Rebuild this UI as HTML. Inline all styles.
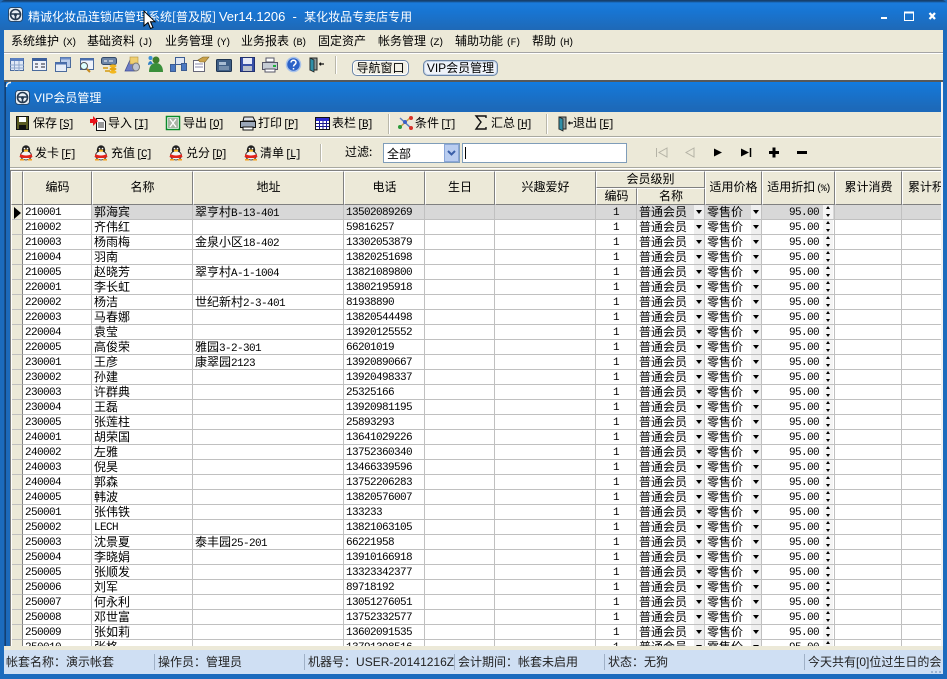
<!DOCTYPE html>
<html lang="zh"><head><meta charset="utf-8"><title>精诚化妆品连锁店管理系统</title>
<style>
*{box-sizing:border-box}
html,body{margin:0;padding:0}
body{width:947px;height:679px;overflow:hidden;position:relative;background:#1c6bbd;font:12px "WenQuanYi Zen Hei","Noto Sans CJK SC",sans-serif;color:#000}
.a{position:absolute;white-space:pre;line-height:14px}
.box{position:absolute}
svg{position:absolute;overflow:visible}
.m{font:10px "Liberation Mono",monospace}
.k{font:10px "Liberation Mono",monospace;letter-spacing:-1.5px;margin-left:3px}
.t{font:11px "Liberation Mono",monospace;letter-spacing:-1.6px;margin-left:1px}
.u{text-decoration:underline}
.w{color:#fff}
.sep{position:absolute;width:2px;background:#b9b7aa;border-right:1px solid #fff}
.h{position:absolute;background:#ece9d8;border-right:1px solid #808080;border-bottom:1px solid #808080;border-left:1px solid #fff;border-top:1px solid #fff;text-align:center;line-height:30px;white-space:pre}
table{position:absolute;left:1px;top:34px;border-collapse:separate;border-spacing:0;table-layout:fixed;width:990px}
th,td{height:15px;padding:2px 0 0 2px;border-right:1px solid #c0c0c0;border-bottom:1px solid #c0c0c0;font:11px/12px "Liberation Mono",monospace;letter-spacing:-.6px;white-space:nowrap;overflow:hidden;position:relative;background:#fff}
th{background:#ece9d8;border-right:1px solid #808080;padding:0}
td.c{font:12px/14px "WenQuanYi Zen Hei","Noto Sans CJK SC",sans-serif;letter-spacing:0;padding-top:0}
td .m{font-size:11px;letter-spacing:-.6px;line-height:0}
td.n{text-align:center;padding:2px 0 0 0}
td.r{text-align:right;padding:2px 15px 0 0}
tr.s td{background:#d8d8d8}
tr.s td:nth-child(2){background:#fff}
td i{position:absolute;right:0;top:0;width:10px;height:14px;background:#efefef}
td i:after{content:"";position:absolute;left:2px;top:5px;border:3px solid transparent;border-top:4px solid #000;border-bottom:0}
td b{position:absolute;right:1px;top:0;width:10px;height:14px;background:#f4f4f4}
td b:before,td b:after{content:"";position:absolute;left:3px;border:2px solid transparent}
td b:before{top:1px;border-bottom:3px solid #000;border-top:0}
td b:after{top:9px;border-top:3px solid #000;border-bottom:0}
.st{position:absolute;top:654px;font:12px/15px "Noto Sans CJK SC","Liberation Sans",sans-serif;color:#222;white-space:pre}
.ss{position:absolute;top:654px;width:1px;height:16px;background:#9fb0c6}
.cl{font-family:"Noto Sans CJK TC",sans-serif}
</style></head><body>
<svg width="0" height="0" style="position:absolute"><defs>
<symbol id="logo" viewBox="0 0 15 15"><rect x=".5" y=".5" width="14" height="14" rx="3" fill="#e8eef5" stroke="#27496e"/><circle cx="7.5" cy="7.5" r="5" fill="none" stroke="#24384f" stroke-width="1.6"/><path d="M3 7h9M7.5 8v4" stroke="#24384f" stroke-width="1.6"/><circle cx="7.5" cy="7.7" r="1.5" fill="#24384f"/></symbol>
<symbol id="qq" viewBox="0 0 16 16"><ellipse cx="8" cy="5" rx="4.2" ry="4.8" fill="#222"/><ellipse cx="8" cy="10.5" rx="5.5" ry="4.5" fill="#f4f4f4" stroke="#222" stroke-width=".8"/><path d="M2.500 9c3 2 8 2 11 0l1 3-3 1-7 0-3-1z" fill="#e2231a"/><ellipse cx="8" cy="5.6" rx="2.2" ry="1.1" fill="#f6b21a"/><path d="M2 14h4v1.500H2zM10 14h4v1.500h-4z" fill="#f6a01a"/><circle cx="6.500" cy="3.600" r=".8" fill="#fff"/><circle cx="9.500" cy="3.600" r=".8" fill="#fff"/></symbol>
<symbol id="door" viewBox="0 0 16 16"><path d="M1 1h7v12H1z" fill="#8b9a9a" stroke="#222"/><path d="M1 1l4 2v12l-4-2z" fill="#2f8fa7" stroke="#222" stroke-width=".8"/><path d="M10 7h3M11.500 5.500v3M13 7h2" stroke="#111" stroke-width="1.300"/></symbol>
</defs></svg>

<!-- window frame -->
<div class="box" style="left:0;top:0;width:947px;height:30px;background:linear-gradient(#16406f 0,#16406f 1px,#1a7bdc 3px,#1875d2 12px,#1f69b6 30px);border-radius:5px 5px 0 0"></div>
<div class="box" style="left:4px;top:30px;width:939px;height:23px;background:#ece9d8;border-bottom:1px solid #a5a5a5"></div>
<div class="box" style="left:4px;top:53px;width:939px;height:27px;background:#ece9d8;border-top:1px solid #fff"></div>
<div class="box" style="left:4px;top:80px;width:939px;height:2px;background:#55585a"></div>
<div class="box" style="left:6px;top:82px;width:935px;height:27px;background:linear-gradient(#0f7ce2 0,#1577d6 4px,#1d69b8 27px)"></div>
<div class="box" style="left:4px;top:82px;width:1px;height:568px;background:#17508f"></div>
<div class="box" style="left:5px;top:82px;width:1px;height:568px;background:#123f72"></div>
<svg style="left:6px;top:82px" width="6" height="6"><path d="M.5 5C.5 2 2 .5 5 .5" fill="none" stroke="#f4f4f4" stroke-width="1.400"/></svg>
<div class="box" style="left:941px;top:82px;width:2px;height:568px;background:#f2f2f2"></div>
<div class="box" style="left:6px;top:109px;width:935px;height:3px;background:#1c69ba"></div>
<div class="box" style="left:10px;top:112px;width:931px;height:58px;background:#ece9d8"></div>
<div class="box" style="left:6px;top:112px;width:4px;height:538px;background:#1c69ba"></div>
<div class="box" style="left:10px;top:136px;width:931px;height:2px;background:#a9a9a0;border-bottom:1px solid #fff"></div>
<div class="box" style="left:10px;top:167px;width:931px;height:2px;background:#a9a9a0;border-bottom:1px solid #fff"></div>

<!-- title bar -->
<svg style="left:8px;top:7px" width="15" height="15"><use href="#logo"/></svg>
<div class="a w" style="left:28px;top:9px;font-size:12px;letter-spacing:0">精诚化妆品连锁店管理系统[普及版] <span style="font:13px 'Liberation Sans',sans-serif">Ver14.1206  -  </span>某化妆品专卖店专用</div>
<svg style="left:880px;top:9px" width="60" height="14"><path d="M1 8h6v2H1z" fill="#fff"/><path d="M24.500 3.500h9v8h-9z" fill="none" stroke="#fff"/><path d="M24 3.500h10" stroke="#fff" stroke-width="2"/><path d="M49.500 4l5.500 6M55 4l-5.500 6" stroke="#fff" stroke-width="2.200"/></svg>

<!-- menu -->
<div class="a" style="left:11px;top:34px">系统维护<span class="k">(X)</span></div>
<div class="a" style="left:87px;top:34px">基础资料<span class="k">(J)</span></div>
<div class="a" style="left:165px;top:34px">业务管理<span class="k">(Y)</span></div>
<div class="a" style="left:241px;top:34px">业务报表<span class="k">(B)</span></div>
<div class="a" style="left:318px;top:34px">固定资产</div>
<div class="a" style="left:378px;top:34px">帐务管理<span class="k">(Z)</span></div>
<div class="a" style="left:455px;top:34px">辅助功能<span class="k">(F)</span></div>
<div class="a" style="left:532px;top:34px">帮助<span class="k">(H)</span></div>

<!-- top icon bar -->
<svg style="left:0;top:0" width="340" height="80">
<g stroke="#4a6a9c" fill="#dfe8f6"><rect x="10.500" y="58.500" width="13" height="12"/><path d="M10.500 59.500h13" stroke="#5a7fc0" stroke-width="3"/><path d="M10 65h14M10 68h14M14.500 61v10M19 61v10" stroke="#8fa7cc" fill="none"/>
<rect x="32.500" y="58.500" width="14" height="12" fill="#eef2fa"/><path d="M32.500 59.500h14" stroke="#3c5f9c" stroke-width="3"/><path d="M35 64h3M41 64h4M35 67h3M41 67h4" stroke="#223"/>
<rect x="60.500" y="57.500" width="10" height="10" fill="#b9cceb"/><path d="M60.500 58.500h10" stroke="#6d8ec8" stroke-width="2"/><rect x="55.500" y="62.500" width="11" height="9" fill="#e6edf8"/><path d="M55 63.500h12" stroke="#4a6fb0" stroke-width="2"/>
<rect x="80.500" y="58.500" width="13" height="11" fill="#eef3fb"/><path d="M80.500 59.500h13" stroke="#4a6fb0" stroke-width="2"/></g>
<circle cx="84" cy="66" r="3.500" fill="#dff" stroke="#555"/><path d="M87 69l3 3" stroke="#c68a1e" stroke-width="2"/>
<rect x="101.500" y="57.500" width="15" height="7" rx="2" fill="#6d86a8" stroke="#33496a"/><path d="M104 61h3M109 61h4" stroke="#fff"/><ellipse cx="113" cy="66" rx="3.500" ry="1.600" fill="#f2b71f"/><ellipse cx="113" cy="69" rx="3.500" ry="1.600" fill="#e5a512"/><ellipse cx="113" cy="72" rx="3.500" ry="1.600" fill="#f2b71f"/><path d="M103 68h5M105 71h5" stroke="#d49a10" stroke-width="1.500"/>
<path d="M125 71l5-11h4l1 11z" fill="#6b7bc4" stroke="#3d4b93" stroke-width=".7"/><rect x="130" y="57" width="8" height="7" fill="#f0cf70" stroke="#b4933f" stroke-width=".6"/><ellipse cx="136" cy="67" rx="3.500" ry="4" fill="#c0c6d2" stroke="#777"/>
<circle cx="156" cy="60" r="3.500" fill="#3f7e2c"/><path d="M149 72c0-7 4-9 7-9s7 2 7 9z" fill="#3a8f3a"/><circle cx="150.500" cy="58" r="2" fill="#3c8fd6"/><path d="M148 65c0-2 1-4 3-4l2 3z" fill="#2f7fc4"/>
<g fill="#dfe6f3" stroke="#3b5b92"><rect x="175.500" y="57.500" width="9" height="7"/><rect x="170.500" y="64.500" width="5" height="7" fill="#4a78c2"/><rect x="181.500" y="63.500" width="5" height="7" fill="#4a78c2"/></g>
<rect x="193.500" y="60.500" width="11" height="11" fill="#fff" stroke="#667"/><path d="M195 64h8M195 67h8" stroke="#88a"/><path d="M198 60l5-3h6l-4 5-5 0z" fill="#caa24a" stroke="#7a6122" stroke-width=".6"/>
<rect x="216.500" y="59.500" width="15" height="12" rx="1" fill="#3f5f86" stroke="#1f3552"/><rect x="219" y="62" width="7" height="3" fill="#a9bdd3"/><path d="M219 67h10M219 69h10" stroke="#a9bdd3"/>
<rect x="240.500" y="57.500" width="14" height="14" fill="#3850a8" stroke="#21306e"/><rect x="243" y="58" width="9" height="6" fill="#e6e9f6"/><rect x="243" y="66" width="9" height="5" fill="#b9bfc9"/>
<path d="M266 58h8v4h-8z" fill="#fff" stroke="#556"/><path d="M262.500 62.500h15v7h-15z" fill="#c6ccd4" stroke="#556"/><path d="M265 69h10v3h-10z" fill="#fff" stroke="#556"/><rect x="273" y="65" width="3" height="2" fill="#1fae3c"/>
<circle cx="293.500" cy="64.500" r="7" fill="#2b62c8" stroke="#a9c3ea" stroke-width="1.500"/><path d="M291 62.500c0-3 5-3 5 0 0 2-2.500 2-2.500 4M293.500 68v1.500" stroke="#fff" stroke-width="1.500" fill="none"/>
</svg>
<svg style="left:309px;top:57px" width="16" height="16"><use href="#door"/></svg>
<div class="sep" style="left:335px;top:56px;height:18px"></div>
<div class="a" style="left:352px;top:60px;width:57px;height:16px;border:1px solid #6c86a8;border-radius:5px;background:#f1efe4;box-shadow:inset 0 0 0 1px #fff;text-align:center">导航窗口</div>
<div class="a" style="left:423px;top:60px;width:75px;height:16px;border:1px solid #6c86a8;border-radius:5px;background:#eef2f9;box-shadow:inset 0 0 0 1px #c6d4e8;text-align:center"><span style="font:12px 'Liberation Sans',sans-serif">VIP</span>会员管理</div>

<!-- child title -->
<svg style="left:15px;top:90px" width="15" height="15"><use href="#logo"/></svg>
<div class="a w" style="left:34px;top:91px"><span style="font:12px 'Liberation Sans',sans-serif">VIP</span>会员管理</div>

<!-- toolbar 1 -->
<svg style="left:0;top:0" width="600" height="170">
<rect x="16.500" y="116.500" width="12" height="13" fill="#5a5a22" stroke="#111"/><rect x="19" y="117" width="7" height="5" fill="#fff"/><rect x="19" y="125" width="7" height="4" fill="#111"/>
<path d="M96.500 118.500h6l3 3v9h-9z" fill="#fff" stroke="#111"/><path d="M98 123h6M98 125h6M98 127h6" stroke="#333"/><path d="M90 119h3v-3l5 5-5 5v-3h-3z" fill="#e8141a"/>
<rect x="166.500" y="116.500" width="13" height="13" fill="#fff" stroke="#0a8a2a" stroke-width="1.500"/><rect x="168" y="118" width="10" height="10" fill="#a9b5a6"/><path d="M170 119l6 8M176 119l-6 8" stroke="#fff" stroke-width="1.300"/>
<path d="M244 117h9l2 4h-12z" fill="#dfe3ea" stroke="#111"/><path d="M240.500 121.500h15v6h-15z" fill="#9aa6b8" stroke="#111"/><path d="M243 127h10v3h-10z" fill="#fff" stroke="#111"/>
<rect x="315.500" y="117.500" width="14" height="12" fill="#fff" stroke="#111"/><rect x="316" y="118" width="13" height="3" fill="#2a2ad0"/><path d="M316 123.500h13M316 126.500h13M319.500 121v8M323 121v8M326.500 121v8" stroke="#1a1a90"/>
<path d="M399 128l12-11" stroke="#caa04a" stroke-width="1.500"/><path d="M400 118l11 10" stroke="#5a7ec0" stroke-width="1.500"/><circle cx="400" cy="127" r="2" fill="#2a9a3a"/><circle cx="411" cy="128" r="2" fill="#d8342a"/><circle cx="411" cy="118" r="2" fill="#d8342a"/><circle cx="405" cy="122" r="2" fill="#3a60c8"/>
<path d="M486 118v-2h-10l5 6-5 7h10v-2" fill="none" stroke="#111" stroke-width="1.400"/>
</svg>
<svg style="left:558px;top:116px" width="16" height="16"><use href="#door"/></svg>
<div class="a" style="left:33px;top:116px">保存<span class="t">[<span class="u">S</span>]</span></div>
<div class="a" style="left:108px;top:116px">导入<span class="t">[<span class="u">I</span>]</span></div>
<div class="a" style="left:183px;top:116px">导出<span class="t">[<span class="u">O</span>]</span></div>
<div class="a" style="left:258px;top:116px">打印<span class="t">[<span class="u">P</span>]</span></div>
<div class="a" style="left:332px;top:116px">表栏<span class="t">[<span class="u">B</span>]</span></div>
<div class="sep" style="left:388px;top:114px;height:20px"></div>
<div class="a" style="left:415px;top:116px">条件<span class="t">[<span class="u">T</span>]</span></div>
<div class="a" style="left:491px;top:116px">汇总<span class="t">[<span class="u">H</span>]</span></div>
<div class="sep" style="left:546px;top:114px;height:20px"></div>
<div class="a" style="left:573px;top:116px">退出<span class="t">[<span class="u">E</span>]</span></div>

<!-- toolbar 2 -->
<svg style="left:18px;top:145px" width="16" height="16"><use href="#qq"/></svg>
<svg style="left:93px;top:145px" width="16" height="16"><use href="#qq"/></svg>
<svg style="left:168px;top:145px" width="16" height="16"><use href="#qq"/></svg>
<svg style="left:243px;top:145px" width="16" height="16"><use href="#qq"/></svg>
<div class="a" style="left:35px;top:146px">发卡<span class="t">[<span class="u">F</span>]</span></div>
<div class="a" style="left:111px;top:146px">充值<span class="t">[<span class="u">C</span>]</span></div>
<div class="a" style="left:186px;top:146px">兑分<span class="t">[<span class="u">D</span>]</span></div>
<div class="a" style="left:260px;top:146px">清单<span class="t">[<span class="u">L</span>]</span></div>
<div class="sep" style="left:320px;top:144px;height:18px"></div>
<div class="a" style="left:345px;top:145px">过滤:</div>
<div class="a" style="left:383px;top:143px;width:77px;height:20px;background:#fff;border:1px solid #7f9db9;padding:3px 3px">全部</div>
<div class="box" style="left:444px;top:144px;width:15px;height:18px;background:#b9cdf0;border:1px solid #8aa6d8"></div>
<svg style="left:444px;top:144px" width="15" height="18"><path d="M4 7l3.500 3.500L11 7" fill="none" stroke="#3a5fa8" stroke-width="2"/></svg>
<div class="box" style="left:462px;top:143px;width:165px;height:20px;background:#fff;border:1px solid #7f9db9"></div>
<div class="box" style="left:465px;top:147px;width:1px;height:12px;background:#000"></div>
<svg style="left:650px;top:145px" width="165" height="15">
<path d="M6.500 3v9M17 3l-8 4.500 8 4.500z" fill="none" stroke="#b5b3a6"/><path d="M44 3l-8 4.500 8 4.500z" fill="none" stroke="#b5b3a6"/>
<path d="M64 3.500l8 4-8 4z" fill="#000"/><path d="M91 3.500l8 4-8 4z" fill="#000"/><path d="M100.500 3v9" stroke="#000" stroke-width="1.500"/>
<path d="M119 7.500h10M124 2.500v10" stroke="#000" stroke-width="3"/><path d="M147 7.500h10" stroke="#000" stroke-width="3"/></svg>

<!-- grid -->
<div class="box" style="left:10px;top:170px;width:931px;height:476px;overflow:hidden;background:#fff;border-top:1px solid #808080;border-left:1px solid #808080">
<div class="h" style="left:0;top:0;width:12px;height:34px"></div>
<div class="h" style="left:12px;top:0;width:69px;height:34px">编码</div>
<div class="h" style="left:81px;top:0;width:101px;height:34px">名称</div>
<div class="h" style="left:182px;top:0;width:151px;height:34px">地址</div>
<div class="h" style="left:333px;top:0;width:81px;height:34px">电话</div>
<div class="h" style="left:414px;top:0;width:70px;height:34px">生日</div>
<div class="h" style="left:484px;top:0;width:101px;height:34px">兴趣爱好</div>
<div class="h" style="left:585px;top:0;width:109px;height:17px;line-height:14px">会员级别</div>
<div class="h" style="left:585px;top:17px;width:41px;height:17px;line-height:14px">编码</div>
<div class="h" style="left:626px;top:17px;width:68px;height:17px;line-height:14px">名称</div>
<div class="h" style="left:694px;top:0;width:57px;height:34px">适用价格</div>
<div class="h" style="left:751px;top:0;width:73px;height:34px">适用折扣<span class="k" style="margin-left:1px">(%)</span></div>
<div class="h" style="left:824px;top:0;width:67px;height:34px">累计消费</div>
<div class="h" style="left:891px;top:0;width:60px;height:34px;text-align:left;padding-left:5px">累计积分</div>
<table>
<colgroup><col style="width:11px"><col style="width:69px"><col style="width:101px"><col style="width:151px"><col style="width:81px"><col style="width:70px"><col style="width:101px"><col style="width:41px"><col style="width:68px"><col style="width:57px"><col style="width:73px"><col style="width:67px"><col style="width:100px"></colgroup>
<tr class="s"><th></th><td>210001</td><td class="c">郭海宾</td><td class="c">翠亨村<span class="m">B-13-401</span></td><td>13502089269</td><td></td><td></td><td class="n">1</td><td class="c">普通会员<i></i></td><td class="c">零售价<i></i></td><td class="r">95.00<b></b></td><td></td><td></td></tr>
<tr><th></th><td>210002</td><td class="c">齐伟红</td><td></td><td>59816257</td><td></td><td></td><td class="n">1</td><td class="c">普通会员<i></i></td><td class="c">零售价<i></i></td><td class="r">95.00<b></b></td><td></td><td></td></tr>
<tr><th></th><td>210003</td><td class="c">杨雨梅</td><td class="c">金泉小区<span class="m">18-402</span></td><td>13302053879</td><td></td><td></td><td class="n">1</td><td class="c">普通会员<i></i></td><td class="c">零售价<i></i></td><td class="r">95.00<b></b></td><td></td><td></td></tr>
<tr><th></th><td>210004</td><td class="c">羽南</td><td></td><td>13820251698</td><td></td><td></td><td class="n">1</td><td class="c">普通会员<i></i></td><td class="c">零售价<i></i></td><td class="r">95.00<b></b></td><td></td><td></td></tr>
<tr><th></th><td>210005</td><td class="c">赵晓芳</td><td class="c">翠亨村<span class="m">A-1-1004</span></td><td>13821089800</td><td></td><td></td><td class="n">1</td><td class="c">普通会员<i></i></td><td class="c">零售价<i></i></td><td class="r">95.00<b></b></td><td></td><td></td></tr>
<tr><th></th><td>220001</td><td class="c">李长虹</td><td></td><td>13802195918</td><td></td><td></td><td class="n">1</td><td class="c">普通会员<i></i></td><td class="c">零售价<i></i></td><td class="r">95.00<b></b></td><td></td><td></td></tr>
<tr><th></th><td>220002</td><td class="c">杨洁</td><td class="c">世纪新村<span class="m">2-3-401</span></td><td>81938890</td><td></td><td></td><td class="n">1</td><td class="c">普通会员<i></i></td><td class="c">零售价<i></i></td><td class="r">95.00<b></b></td><td></td><td></td></tr>
<tr><th></th><td>220003</td><td class="c">马春娜</td><td></td><td>13820544498</td><td></td><td></td><td class="n">1</td><td class="c">普通会员<i></i></td><td class="c">零售价<i></i></td><td class="r">95.00<b></b></td><td></td><td></td></tr>
<tr><th></th><td>220004</td><td class="c">袁莹</td><td></td><td>13920125552</td><td></td><td></td><td class="n">1</td><td class="c">普通会员<i></i></td><td class="c">零售价<i></i></td><td class="r">95.00<b></b></td><td></td><td></td></tr>
<tr><th></th><td>220005</td><td class="c">高俊荣</td><td class="c">雅园<span class="m">3-2-301</span></td><td>66201019</td><td></td><td></td><td class="n">1</td><td class="c">普通会员<i></i></td><td class="c">零售价<i></i></td><td class="r">95.00<b></b></td><td></td><td></td></tr>
<tr><th></th><td>230001</td><td class="c">王彦</td><td class="c">康翠园<span class="m">2123</span></td><td>13920890667</td><td></td><td></td><td class="n">1</td><td class="c">普通会员<i></i></td><td class="c">零售价<i></i></td><td class="r">95.00<b></b></td><td></td><td></td></tr>
<tr><th></th><td>230002</td><td class="c">孙建</td><td></td><td>13920498337</td><td></td><td></td><td class="n">1</td><td class="c">普通会员<i></i></td><td class="c">零售价<i></i></td><td class="r">95.00<b></b></td><td></td><td></td></tr>
<tr><th></th><td>230003</td><td class="c">许群典</td><td></td><td>25325166</td><td></td><td></td><td class="n">1</td><td class="c">普通会员<i></i></td><td class="c">零售价<i></i></td><td class="r">95.00<b></b></td><td></td><td></td></tr>
<tr><th></th><td>230004</td><td class="c">王磊</td><td></td><td>13920981195</td><td></td><td></td><td class="n">1</td><td class="c">普通会员<i></i></td><td class="c">零售价<i></i></td><td class="r">95.00<b></b></td><td></td><td></td></tr>
<tr><th></th><td>230005</td><td class="c">张莲柱</td><td></td><td>25893293</td><td></td><td></td><td class="n">1</td><td class="c">普通会员<i></i></td><td class="c">零售价<i></i></td><td class="r">95.00<b></b></td><td></td><td></td></tr>
<tr><th></th><td>240001</td><td class="c">胡荣国</td><td></td><td>13641029226</td><td></td><td></td><td class="n">1</td><td class="c">普通会员<i></i></td><td class="c">零售价<i></i></td><td class="r">95.00<b></b></td><td></td><td></td></tr>
<tr><th></th><td>240002</td><td class="c">左雅</td><td></td><td>13752360340</td><td></td><td></td><td class="n">1</td><td class="c">普通会员<i></i></td><td class="c">零售价<i></i></td><td class="r">95.00<b></b></td><td></td><td></td></tr>
<tr><th></th><td>240003</td><td class="c">倪昊</td><td></td><td>13466339596</td><td></td><td></td><td class="n">1</td><td class="c">普通会员<i></i></td><td class="c">零售价<i></i></td><td class="r">95.00<b></b></td><td></td><td></td></tr>
<tr><th></th><td>240004</td><td class="c">郭森</td><td></td><td>13752206283</td><td></td><td></td><td class="n">1</td><td class="c">普通会员<i></i></td><td class="c">零售价<i></i></td><td class="r">95.00<b></b></td><td></td><td></td></tr>
<tr><th></th><td>240005</td><td class="c">韩波</td><td></td><td>13820576007</td><td></td><td></td><td class="n">1</td><td class="c">普通会员<i></i></td><td class="c">零售价<i></i></td><td class="r">95.00<b></b></td><td></td><td></td></tr>
<tr><th></th><td>250001</td><td class="c">张伟铁</td><td></td><td>133233</td><td></td><td></td><td class="n">1</td><td class="c">普通会员<i></i></td><td class="c">零售价<i></i></td><td class="r">95.00<b></b></td><td></td><td></td></tr>
<tr><th></th><td>250002</td><td>LECH</td><td></td><td>13821063105</td><td></td><td></td><td class="n">1</td><td class="c">普通会员<i></i></td><td class="c">零售价<i></i></td><td class="r">95.00<b></b></td><td></td><td></td></tr>
<tr><th></th><td>250003</td><td class="c">沈景夏</td><td class="c">泰丰园<span class="m">25-201</span></td><td>66221958</td><td></td><td></td><td class="n">1</td><td class="c">普通会员<i></i></td><td class="c">零售价<i></i></td><td class="r">95.00<b></b></td><td></td><td></td></tr>
<tr><th></th><td>250004</td><td class="c">李晓娟</td><td></td><td>13910166918</td><td></td><td></td><td class="n">1</td><td class="c">普通会员<i></i></td><td class="c">零售价<i></i></td><td class="r">95.00<b></b></td><td></td><td></td></tr>
<tr><th></th><td>250005</td><td class="c">张顺发</td><td></td><td>13323342377</td><td></td><td></td><td class="n">1</td><td class="c">普通会员<i></i></td><td class="c">零售价<i></i></td><td class="r">95.00<b></b></td><td></td><td></td></tr>
<tr><th></th><td>250006</td><td class="c">刘军</td><td></td><td>89718192</td><td></td><td></td><td class="n">1</td><td class="c">普通会员<i></i></td><td class="c">零售价<i></i></td><td class="r">95.00<b></b></td><td></td><td></td></tr>
<tr><th></th><td>250007</td><td class="c">何永利</td><td></td><td>13051276051</td><td></td><td></td><td class="n">1</td><td class="c">普通会员<i></i></td><td class="c">零售价<i></i></td><td class="r">95.00<b></b></td><td></td><td></td></tr>
<tr><th></th><td>250008</td><td class="c">邓世富</td><td></td><td>13752332577</td><td></td><td></td><td class="n">1</td><td class="c">普通会员<i></i></td><td class="c">零售价<i></i></td><td class="r">95.00<b></b></td><td></td><td></td></tr>
<tr><th></th><td>250009</td><td class="c">张如莉</td><td></td><td>13602091535</td><td></td><td></td><td class="n">1</td><td class="c">普通会员<i></i></td><td class="c">零售价<i></i></td><td class="r">95.00<b></b></td><td></td><td></td></tr>
<tr><th></th><td>250010</td><td class="c">张格</td><td></td><td>13791398516</td><td></td><td></td><td class="n">1</td><td class="c">普通会员<i></i></td><td class="c">零售价<i></i></td><td class="r">95.00<b></b></td><td></td><td></td></tr>
</table>
<svg style="left:3px;top:36px" width="8" height="12"><path d="M0 0l7 6-7 6z" fill="#000"/></svg>
</div>

<!-- status -->
<div class="box" style="left:4px;top:646px;width:939px;height:4px;background:#ece9d8"></div>
<div class="box" style="left:4px;top:650px;width:939px;height:24px;background:#cfdff3"></div>
<div class="st" style="left:6px">帐套名称<span class="cl">：</span>演示帐套</div>
<div class="ss" style="left:154px"></div>
<div class="st" style="left:158px">操作员<span class="cl">：</span>管理员</div>
<div class="ss" style="left:304px"></div>
<div class="st" style="left:308px">机器号<span class="cl">：</span><span style="font-family:'Liberation Sans',sans-serif">USER-20141216Z</span></div>
<div class="ss" style="left:454px"></div>
<div class="st" style="left:458px">会计期间<span class="cl">：</span>帐套未启用</div>
<div class="ss" style="left:604px"></div>
<div class="st" style="left:608px">状态<span class="cl">：</span>无狗</div>
<div class="ss" style="left:804px"></div>
<div class="st" style="left:808px;width:133px;overflow:hidden">今天共有<span style="font-family:'Liberation Sans',sans-serif">[0]</span>位过生日的会员</div>
<svg style="left:930px;top:670px" width="12" height="4"><path d="M1 1h2v2H1zM5 1h2v2H5zM9 1h2v2H9z" fill="#9db4d0"/></svg>

<!-- cursor -->
<svg style="left:143px;top:10px" width="14" height="20"><path d="M1 1v15l4-3.500 2.500 6 2.500-1-2.500-5.800H12z" fill="#fff" stroke="#000"/></svg>
</body></html>
